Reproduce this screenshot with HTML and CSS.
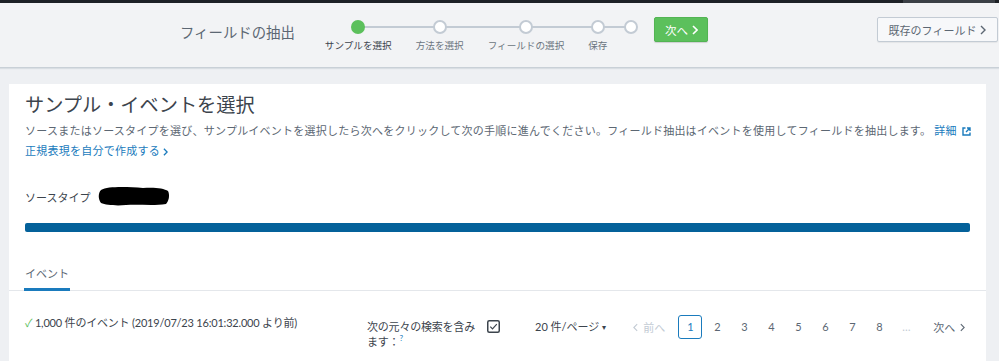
FILE: index.html
```html
<!DOCTYPE html>
<html lang="ja">
<head>
<meta charset="utf-8">
<title>フィールドの抽出</title>
<link rel="stylesheet" href="styles.css">
</head>
<body>
<div class="topstrip"><span class="topstrip-seg"></span></div>
<header class="header">
  <div class="header-title">フィールドの抽出</div>
  <div class="steps">
    <div class="step active"><span class="dot"></span><span class="step-label">サンプルを選択</span></div>
    <div class="step"><span class="dot"></span><span class="step-label">方法を選択</span></div>
    <div class="step"><span class="dot"></span><span class="step-label">フィールドの選択</span></div>
    <div class="step"><span class="dot"></span><span class="step-label">保存</span></div>
    <div class="step last"><span class="dot"></span></div>
  </div>
  <button class="btn-next">次へ<svg class="chev" viewBox="0 0 6 10" width="6" height="10"><path d="M1 1l4 4-4 4" fill="none" stroke="currentColor" stroke-width="1.6"/></svg></button>
  <div class="spacer"></div>
  <button class="btn-existing">既存のフィールド<svg class="chev" viewBox="0 0 6 10" width="6" height="10"><path d="M1 1l4 4-4 4" fill="none" stroke="currentColor" stroke-width="1.4"/></svg></button>
</header>

<main class="card">
  <section class="card-top">
    <h1 class="title">サンプル・イベントを選択</h1>
    <p class="desc">ソースまたはソースタイプを選び、サンプルイベントを選択したら次へをクリックして次の手順に進んでください。フィールド抽出はイベントを使用してフィールドを抽出します。 <a class="link">詳細 <svg class="ext" viewBox="0 0 9 9" width="9" height="9"><path d="M3.5 1H1v7h7V5.5" fill="none" stroke="currentColor" stroke-width="1.4"/><path d="M5 1h3v3M8 1L4 5" fill="none" stroke="currentColor" stroke-width="1.4"/></svg></a></p>
    <p class="desc"><a class="link">正規表現を自分で作成する<svg class="chev-sm" viewBox="0 0 6 10" width="5" height="8"><path d="M1 1l4 4-4 4" fill="none" stroke="currentColor" stroke-width="1.6"/></svg></a></p>
    <div class="sourcetype">
      <span>ソースタイプ</span>
      <svg class="redact" viewBox="0 0 72 22" width="72" height="22"><path d="M3 5 C10 1 30 2 45 3 C55 2 66 3 70 6 C72 10 71 16 68 19 C55 21 40 19 28 20 C18 21 8 20 3 18 C0 14 0 8 3 5 Z" fill="#000"/></svg>
    </div>
    <div class="progress"></div>
  </section>
  <nav class="tabs">
    <span class="tab active">イベント</span>
  </nav>
  <section class="toolbar">
    <div class="count"><span class="check">✓</span> 1,000 件のイベント (2019/07/23 16:01:32.000 より前)</div>
    <div class="include">
      <span class="include-label">次の元々の検索を含み<br>ます：<sup class="help">?</sup></span>
      <span class="checkbox"><svg viewBox="0 0 13 13" width="13" height="13"><rect x="0.75" y="0.75" width="11.5" height="11.5" rx="1.5" fill="none" stroke="#3c444d" stroke-width="1.5"/><path d="M3.3 6.6l2.2 2.2 4.3-4.6" fill="none" stroke="#3c444d" stroke-width="1.2"/></svg></span>
    </div>
    <div class="perpage">20 件/ページ<span class="caret">▾</span></div>
    <div class="pager">
      <span class="pg-prev"><svg viewBox="0 0 6 10" width="5" height="9"><path d="M5 1L1 5l4 4" fill="none" stroke="currentColor" stroke-width="1.3"/></svg> 前へ</span>
      <span class="pg current">1</span>
      <span class="pg">2</span>
      <span class="pg">3</span>
      <span class="pg">4</span>
      <span class="pg">5</span>
      <span class="pg">6</span>
      <span class="pg">7</span>
      <span class="pg">8</span>
      <span class="pg dim">…</span>
      <span class="pg-next">次へ <svg viewBox="0 0 6 10" width="5" height="9"><path d="M1 1l4 4-4 4" fill="none" stroke="currentColor" stroke-width="1.3"/></svg></span>
    </div>
  </section>
</main>
</body>
</html>
```

FILE: styles.css
```css
* { box-sizing: border-box; }
html, body { margin: 0; padding: 0; }
body {
  background: #eef0f3;
  font-family: "Lato", "Noto Sans CJK JP", sans-serif;
  color: #5c6773;
  font-size: 11px;
  overflow: hidden;
  height: 361px;
}

.topstrip {
  height: 3px;
  background: #1d2126;
  display: flex;
  justify-content: flex-end;
}
.topstrip-seg {
  width: 92px;
  height: 3px;
  background: #3a3f45;
  margin-right: 4px;
}

.header {
  height: 65px;
  background: #f2f3f5;
  border-bottom: 1px solid #c9d0d7;
  box-shadow: 0 1px 1px #d9dee3;
  display: flex;
  align-items: flex-start;
  padding: 14px 1px 0 180px;
}
.header-title {
  font-size: 14.4px;
  line-height: 20px;
  margin-top: 6px;
  color: #5c6773;
  white-space: nowrap;
}

.steps {
  display: flex;
  align-items: flex-start;
  gap: 24px;
  margin-left: 30px;
  margin-top: 3px;
  position: relative;
}
.steps::before {
  content: "";
  position: absolute;
  left: 33px;
  right: 7px;
  top: 6px;
  height: 2px;
  background: #c3cbd4;
}
.step {
  display: flex;
  flex-direction: column;
  align-items: center;
  position: relative;
}
.step.last { margin-left: -7px; }
.dot {
  width: 14px;
  height: 14px;
  border-radius: 50%;
  background: #fff;
  border: 2px solid #c3cbd4;
}
.step.active .dot {
  background: #5cc05c;
  border-color: #5cc05c;
}
.step-label {
  margin-top: 5px;
  font-size: 9.6px;
  line-height: 13px;
  color: #6b7580;
  white-space: nowrap;
}
.step.active .step-label { color: #3c444d; }

.btn-next {
  margin-left: 16px;
  height: 25px;
  width: 54px;
  flex: none;
  background: #5cc05c;
  border: 1px solid #53b453;
  border-radius: 2px;
  color: #fff;
  font-family: inherit;
  font-size: 11.5px;
  display: flex;
  align-items: center;
  justify-content: center;
  gap: 4px;
  padding: 0;
  box-shadow: 0 1px 1px rgba(0,0,0,0.15);
}
.spacer { flex: 1; }
.btn-existing {
  height: 25px;
  width: 121px;
  flex: none;
  background: #f7f8fa;
  border: 1px solid #c3cbd4;
  border-radius: 2px;
  color: #5c6773;
  font-family: inherit;
  font-size: 11px;
  display: flex;
  align-items: center;
  justify-content: center;
  gap: 4px;
  padding: 0;
  box-shadow: 0 1px 1px rgba(0,0,0,0.06);
}
.chev { display: block; }

.card {
  background: #fff;
  margin: 16px 13px 0 9px;
  height: 277px;
  overflow: hidden;
}
.card-top {
  padding: 9px 16px 0 16px;
}
.title {
  margin: 0;
  font-size: 19.2px;
  line-height: 24px;
  font-weight: 400;
  color: #3c444d;
}
.desc {
  margin: 0;
  line-height: 20px;
  font-size: 11px;
  letter-spacing: 0.24px;
  white-space: nowrap;
}
.title + .desc { margin-top: 4px; }
.link {
  color: #1a7bbd;
  text-decoration: none;
}
.ext { vertical-align: -1px; margin-left: 2px; }
.chev-sm { margin-left: 3px; vertical-align: -1px; }

.sourcetype {
  margin-top: 26px;
  height: 20px;
  display: flex;
  align-items: center;
  gap: 8px;
  color: #3c444d;
}
.redact { display: block; margin-top: -2px; }

.progress {
  margin-top: 16px;
  height: 9px;
  background: #04619a;
  border-radius: 2px;
}

.tabs {
  margin-top: 32px;
  padding-left: 15px;
  border-bottom: 1px solid #e4e7eb;
  display: flex;
}
.tab {
  line-height: 20px;
  padding: 0 1px 4px;
  color: #5c6773;
  border-bottom: 3px solid transparent;
  margin-bottom: -1px;
}
.tab.active { border-bottom-color: #1a7bbd; }

.toolbar {
  display: flex;
  align-items: flex-start;
  padding: 23px 0 0 16px;
}
.count {
  flex: none;
  width: 342px;
  line-height: 18px;
  color: #3c444d;
  white-space: nowrap;
  letter-spacing: -0.2px;
}
.check { color: #5cc05c; }

.include {
  display: flex;
  align-items: flex-start;
  gap: 12px;
  padding-top: 5px;
}
.include-label {
  line-height: 15px;
  color: #3c444d;
  white-space: nowrap;
  letter-spacing: -0.2px;
}
.help {
  color: #1a7bbd;
  font-size: 8px;
  vertical-align: 5px;
  line-height: 0;
}
.checkbox { display: block; margin-top: 1px; }
.checkbox svg { display: block; }

.perpage {
  margin-left: 35px;
  line-height: 24px;
  padding-top: 1px;
  color: #3c444d;
  white-space: nowrap;
}
.caret { font-size: 8px; margin-left: 3px; vertical-align: 1px; }

.pager {
  margin-left: 27px;
  display: flex;
  align-items: center;
  gap: 3px;
  height: 24px;
  margin-top: 1px;
}
.pg-prev {
  color: #c3cbd4;
  margin-right: 10px;
  white-space: nowrap;
  display: flex;
  align-items: center;
  gap: 5px;
}
.pg {
  width: 24px;
  height: 24px;
  line-height: 22px;
  text-align: center;
  border: 1px solid transparent;
  border-radius: 3px;
  color: #5c6773;
}
.pg.current {
  border-color: #1a7bbd;
  color: #1a7bbd;
}
.pg.dim { color: #c3cbd4; }
.pg-next {
  margin-left: 12px;
  white-space: nowrap;
  display: flex;
  align-items: center;
  gap: 5px;
  color: #5c6773;
}
```
